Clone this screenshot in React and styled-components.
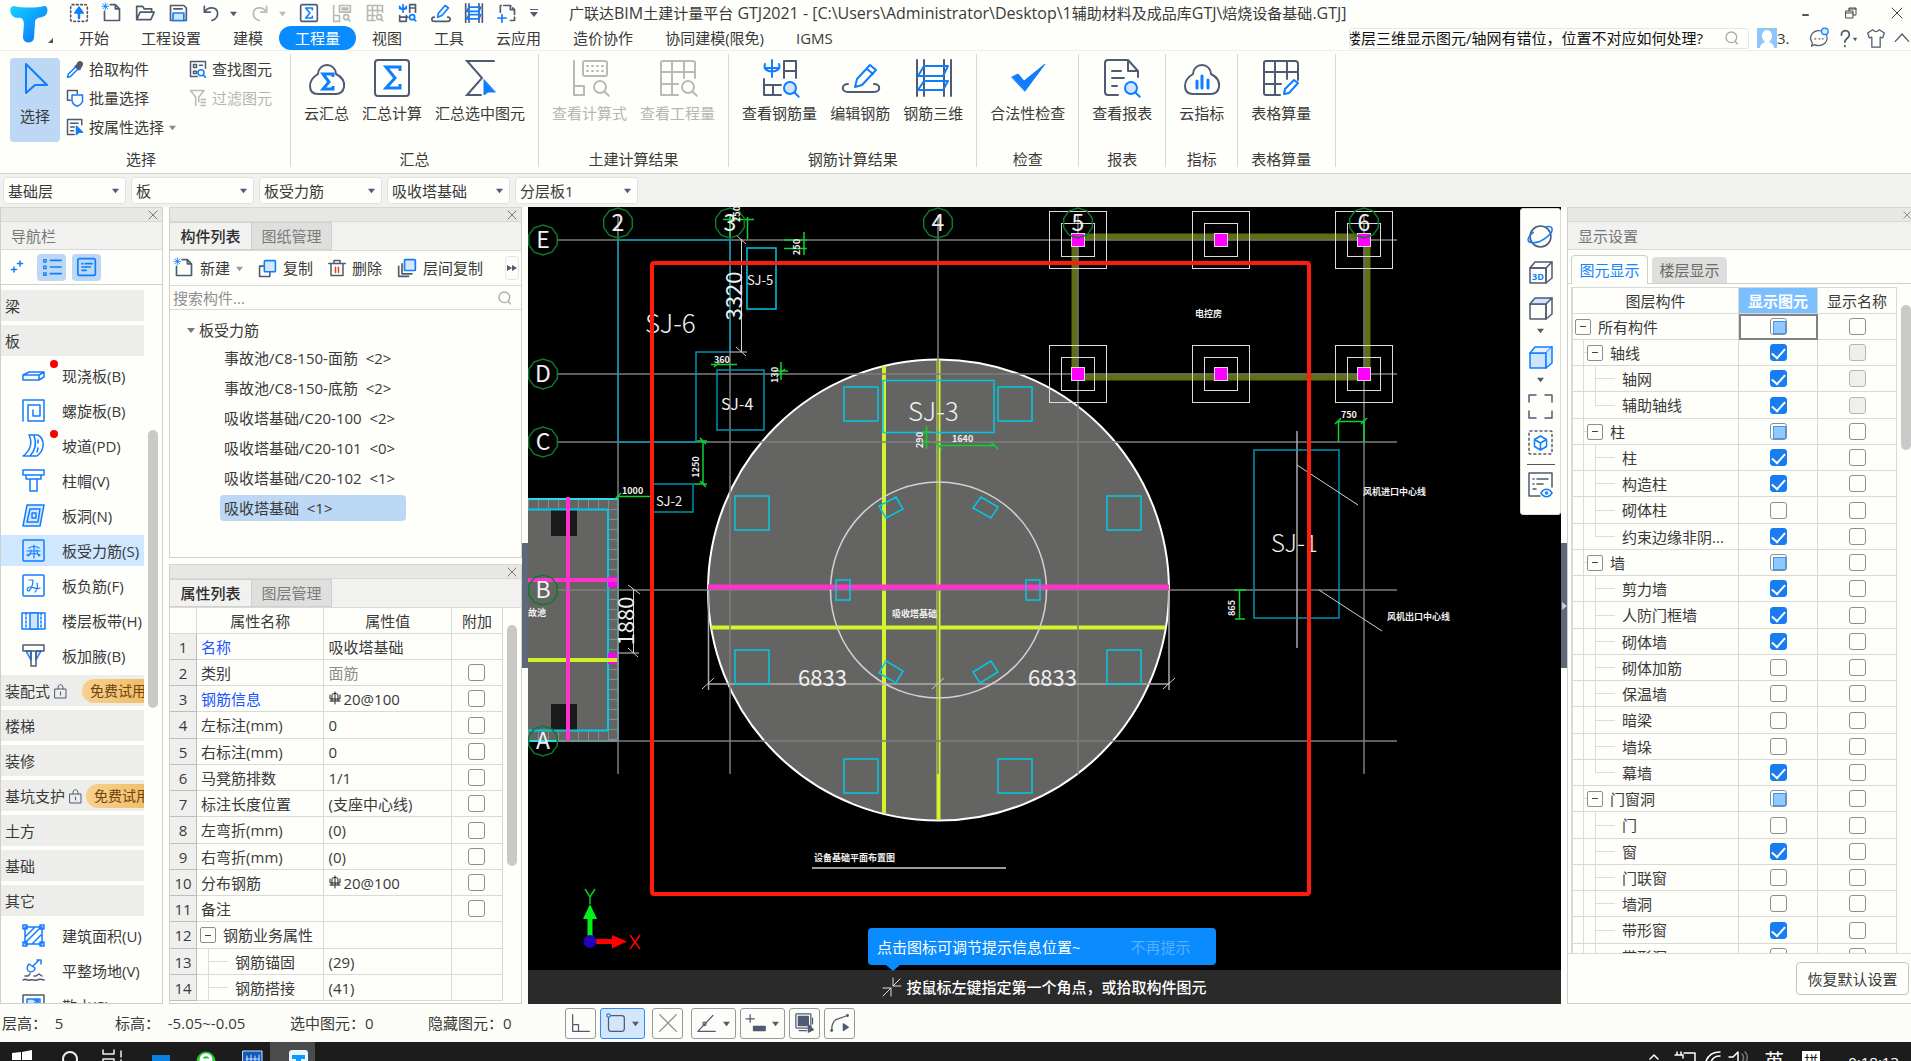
import React, { useEffect, useRef } from "react";
import styled, { createGlobalStyle, css } from "styled-components";

const INK = "#4f5b72";
const BLUE = "#0f7dff";
const LINE = "#d9dad6";
const PAPER = "#fefefb";
const GREY = "#b9bab8";

const Global = createGlobalStyle`
  * { box-sizing: border-box; }
  body { margin: 0; background: ${PAPER}; }
  body, button, input, select, table {
    font-family: "Open Sans", "Noto Sans CJK SC", sans-serif;
    font-size: 15px;
    line-height: 20px;
    color: #3a3a3a;
  }
  button { border: 0; padding: 0; background: none; white-space: nowrap; }
`;

const Window = styled.div`
  display: flex;
  flex-direction: column;
  height: 100vh;
  overflow: hidden;
  background: ${PAPER};
`;

/* ---------- icons ---------- */
const Glyph = styled.svg`
  display: block;
  flex: none;
  overflow: visible;
  fill: none;
  stroke-width: ${(p) => p.$stroke || 2};
  stroke-linecap: round;
  stroke-linejoin: round;
`;

const Icon = ({ w = 20, h, vb = 24, stroke, color = INK, children }) => (
  <Glyph width={w} height={h || w} viewBox={`0 0 ${vb} ${h ? (vb * h) / w : vb}`} $stroke={stroke} stroke={color} aria-hidden="true">
    {children}
  </Glyph>
);

const Caret = ({ color = INK, w = 8 }) => (
  <Icon w={w} vb={8} color="none"><path d="M0 2h8L4 7z" fill={color} /></Icon>
);
const Lens = ({ x, y, r = 4, c = BLUE, fill = "none" }) => (
  <g stroke={c}><circle cx={x} cy={y} r={r} fill={fill} /><path d={`M${x + r * 0.75} ${y + r * 0.75}l${r * 0.7} ${r * 0.7}`} /></g>
);
const CloseIcon = ({ w = 10 }) => <Icon w={w} vb={10} stroke={1} color="#777"><path d="M1 1l8 8M9 1l-8 8" /></Icon>;
const SearchIcon = () => <Icon w={16} stroke={2} color="#aaa"><circle cx="11" cy="11" r="8" /><path d="M17 17l3 4" /></Icon>;

const Sheet = ({ c = INK }) => <path stroke={c} d="M10 2h6l5 5v14H3V10M16 2v5h5" />;
const RebarMark = ({ c = BLUE }) => <path stroke={c} d="M6 2v9M2 4c0 5 8 5 8 0M2 6.500h8" />;

const quick = {
  up: <Icon stroke={2}><rect x="2" y="2" width="20" height="20" rx="2" strokeDasharray="2 3" /><path d="M12 18v-7" stroke={BLUE} strokeWidth="3" /><path d="M7 12l5-7 5 7z" fill={BLUE} stroke={BLUE} /></Icon>,
  neu: <Icon><Sheet /><path stroke={BLUE} d="M1 1l6 6M7 1L1 7M4 0v8M0 4h8" strokeWidth="1" /></Icon>,
  open: <Icon><path d="M2 20V4h7l2 3h9v4M2 20l4-9h17l-4 9z" /></Icon>,
  save: <Icon><path d="M3 3h16l3 3v15H3z" /><path d="M6 21v-9h13v9z" stroke={BLUE} fill="#cfe5ff" /><path d="M7 7h10" /></Icon>,
  undo: <Icon><path d="M4 4v7h7M4 11C8 4 19 4 20 12c0 5-3 8-7 9" /></Icon>,
  redo: <Icon color={GREY}><path d="M20 4v7h-7M20 11C16 4 5 4 4 12c0 5 3 8 7 9" /></Icon>,
  sum: <Icon><rect x="2" y="2" width="20" height="20" rx="2" /><path d="M16 8V6H8l5 6-5 6h8v-2" stroke={BLUE} /></Icon>,
  calc: <Icon color={GREY}><path d="M2 3v19h7v-7H2M9 3h13v8H9zM12 6h7M12 8h7" /><Lens x={17} y={17} r={3} c={GREY} /></Icon>,
  grid: <Icon color={GREY}><path d="M21 11V3H3v18h9M3 9h18M3 15h9M9 3v18M15 3v9" /><Lens x={17} y={17} r={3} c={GREY} /></Icon>,
  rebar: <Icon><RebarMark /><path d="M14 11V2h7v9M14 6h7M2 15v7h8v-7M2 17h10" /><Lens x={17} y={17} r={3} /></Icon>,
  edit: <Icon><path d="M4 17c-4 0-4 5 0 5h16c4 0 4-5 0-5" /><path stroke={BLUE} d="M8 17l1-5 8-9 4 3-8 9z" /></Icon>,
  three: <Icon><path d="M2 1v22M6 1v22M18 1v22M22 1v22" /><path stroke={BLUE} d="M6 5h14l-2 5H3zM6 14h14l-2 5H3z" /></Icon>,
  add: <Icon><path d="M4 11V3h12l5 5v13h-7M16 3v5h5" strokeDasharray="9 3" /><path stroke={BLUE} d="M6 14v9M1 18h10" /></Icon>,
};

const BigSigma = ({ d, c }) => <path d={d} stroke={c} strokeWidth="3" strokeLinejoin="miter" strokeLinecap="butt" />;
const Cloud = () => <path d="M11 16a9 9 0 0 1 18 0c6 3 9 7 8 13-1 5-4 7-8 7H11c-5 0-8-3-8-8 0-6 3-9 8-12z" />;
const big = {
  cloudSum: <><Cloud /><BigSigma c={BLUE} d="M26 19v-3H16l6 8-6 7h10v-3" /></>,
  sum: <><rect x="3" y="2" width="34" height="36" rx="3" /><BigSigma c={BLUE} d="M28 13V9H14l9 11-9 10h14v-4" /></>,
  sumPick: <><path d="M34 3H7l15 17L7 37h14" strokeLinejoin="miter" /><path d="M24 22v15l4-3h7z" fill={BLUE} stroke={BLUE} strokeWidth="1" /></>,
  calc: <><path d="M4 3v34h10v-9H4" /><rect x="13" y="3" width="24" height="15" rx="2" /><path d="M17 8h16M17 13h16" strokeDasharray="1 4" /><Lens x={30} y={29} r={6} c={GREY} /></>,
  grid: <><path d="M37 20V5a2 2 0 0 0-2-2H5a2 2 0 0 0-2 2v32h17M3 14h34M3 26h17M14 3v34M26 3v17" /><Lens x={30} y={29} r={6} c={GREY} /></>,
  rebar: <><path stroke={BLUE} d="M12 2v17M5 6c-4 10 18 10 14 0M5 10h14" /><path d="M24 20V3h12v17M24 13h12M4 21v16h17M4 27h17M13 27v10" /><Lens x={30} y={30} r={6} fill="#cfe5ff" /></>,
  edit: <><path d="M8 26c-7 0-7 8 0 8h26c7 0 7-8 0-8" /><path stroke={BLUE} d="M15 29l2-8 13-14 6 5-14 15zM27 11l6 5" /></>,
  three: <><path d="M4 2v36M11 2v36M31 2v36M38 2v36" /><path stroke={BLUE} d="M11 8h24l-5 10H5zM11 23h24l-5 9H5z" /></>,
  check: <path d="M4 19l6-3 6 7L37 6 17 33z" fill={BLUE} stroke={BLUE} strokeWidth="1" />,
  report: <><path d="M16 37H6a3 3 0 0 1-3-3V5a3 3 0 0 1 3-3h20l10 11v6M26 2v11h10M10 13h9M10 20h12M10 28h5" /><Lens x={29} y={30} r={6} fill="#cfe5ff" /></>,
  cloudBar: <><Cloud /><path stroke={BLUE} strokeWidth="3" d="M15 23v7M20 18v12M26 22v8" /></>,
  table: <><path d="M37 22V6a3 3 0 0 0-3-3H5a2 2 0 0 0-2 2v30a2 2 0 0 0 2 2h14M3 14h34M3 26h17M14 3v34M26 3v18" /><path stroke={BLUE} d="M23 36l1-5 9-9 4 3-9 10z" /></>,
};

/* ---------- title area ---------- */
const Head = styled.header`
  display: flex;
  height: 51px;
  border-bottom: 1px solid #eeeeeb;
`;
const Brand = styled.div`
  display: flex;
  align-items: flex-end;
  width: 63px;
  padding: 0 0 7px 10px;
`;
const HeadRows = styled.div`
  display: flex;
  flex-direction: column;
  flex: 1;
  min-width: 0;
`;
const TitleRow = styled.div`
  display: flex;
  align-items: center;
  height: 27px;
  padding: 0 8px 0 6px;
`;
const QuickBar = styled.div`
  display: flex;
  align-items: center;
  gap: 13px;
  width: 500px;
`;
const Split = styled.div`
  display: flex;
  align-items: center;
  gap: 9px;
`;
const Title = styled.h1`
  flex: 1;
  margin: 0;
  font-size: 15px;
  font-weight: 400;
  line-height: 20px;
  white-space: nowrap;
`;
const Latin = styled.span`
  font-size: 16px;
`;
const WinButtons = styled.div`
  display: flex;
  align-items: center;
  gap: 34px;
`;
const MenuRow = styled.nav`
  display: flex;
  align-items: center;
  height: 24px;
`;
const MenuItem = styled.button`
  height: 24px;
  padding: 0 16px;
  border-radius: 12px;
  ${(p) => p.$active && css`background: #0a8cff; color: #fff;`}
`;
const MenuTools = styled.div`
  display: flex;
  align-items: center;
  gap: 8px;
  margin-left: auto;
  padding-right: 1px;
`;
const HelpBox = styled.label`
  display: flex;
  align-items: center;
  width: 400px;
  height: 21px;
  padding-right: 8px;
  border: 1px solid #e6e6e3;
  border-radius: 3px;
`;
const PlainInput = styled.input`
  flex: 1;
  min-width: 0;
  height: 20px;
  padding: 0;
  border: 0;
  outline: 0;
  background: transparent;
  color: #111;
  text-indent: ${(p) => p.$shift || 0}px;
  &::placeholder { color: #8f8f8f; opacity: 1; }
`;
const Account = styled.div`
  display: flex;
  align-items: center;
  width: 44px;
`;

/* ---------- ribbon ---------- */
const Ribbon = styled.div`
  display: flex;
  height: 123px;
  padding: 3px 0 6px;
  border-bottom: 1px solid #d6d7d3;
`;
const Group = styled.section`
  display: flex;
  flex-direction: column;
  justify-content: space-between;
  padding: ${(p) => p.$pad || "4px 13px 0"};
  border-right: 1px solid #d9dad6;
`;
const GroupName = styled.div`
  height: 18px;
  text-align: center;
  line-height: 20px;
`;
const GroupBody = styled.div`
  display: flex;
  gap: 13px;
`;
const PickBody = styled.div`
  display: flex;
  gap: 6px;
`;
const BigButton = styled.button`
  display: flex;
  flex-direction: column;
  align-items: center;
  gap: 5px;
  color: ${(p) => (p.$off ? "#b5b6b4" : "#3a3a3a")};
`;
const PickButton = styled(BigButton)`
  width: 50px;
  height: 84px;
  padding-top: 1px;
  border-radius: 4px;
  background: #bcd8f5;
`;
const SmallCol = styled.div`
  display: flex;
  flex-direction: column;
  gap: 9px;
  padding-top: 1px;
`;
const SmallButton = styled.button`
  display: flex;
  align-items: center;
  gap: 5px;
  height: 20px;
  color: ${(p) => (p.$off ? "#b5b6b4" : "#3a3a3a")};
`;

/* ---------- filter bar ---------- */
const FilterBar = styled.div`
  display: flex;
  gap: 5px;
  height: 33px;
  padding: 3px;
  background: #f1f1ef;
`;
const ComboBox = styled.label`
  display: grid;
  grid-template-columns: 1fr 13px;
  align-items: center;
  width: 123px;
  height: 27px;
  border: 1px solid #e2e2df;
  border-radius: 4px;
  background: ${PAPER};
`;
const ComboSelect = styled.select`
  grid-area: 1 / 1 / 2 / 3;
  appearance: none;
  width: 100%;
  height: 25px;
  padding: 0 4px;
  border: 0;
  background: transparent;
`;
const ComboArrow = styled.span`
  grid-area: 1 / 2 / 2 / 3;
  pointer-events: none;
`;

/* ---------- panels ---------- */
const Main = styled.main`
  display: flex;
  flex: 1;
  min-height: 0;
`;
const Panel = styled.section`
  display: flex;
  flex-direction: column;
  flex: ${(p) => p.$flex || "none"};
  min-height: 0;
  border: 1px solid #cfd0cd;
  border-top: 0;
  overflow: hidden;
`;
const NavPanel = styled(Panel)`
  width: 163px;
  margin-right: 6px;
`;
const MidColumn = styled.div`
  display: flex;
  flex-direction: column;
  gap: 6px;
  width: 353px;
`;
const SidePanel = styled(Panel)`
  width: 344px;
  border-right: 0;
`;
const Strip = styled.div`
  display: flex;
  flex: none;
  align-items: center;
  justify-content: flex-end;
  height: 15px;
  padding-right: ${(p) => (p.$edge ? 0 : 4)}px;
  border-top: 1px solid #d6d7d3;
  border-bottom: 1px solid #d9dad6;
  background: #e7e7e4;
`;
const PanelTitle = styled.h2`
  flex: none;
  height: 28px;
  margin: 0;
  padding: 4px 10px;
  border-bottom: 1px solid ${LINE};
  background: #f1f1ef;
  color: #777;
  font-size: 15px;
  font-weight: 400;
  line-height: 20px;
`;
const NavTools = styled.div`
  display: flex;
  flex: none;
  align-items: center;
  gap: 6px;
  height: 35px;
  padding-left: 1px;
  border-bottom: 1px solid #cfd0cd;
`;
const NavTool = styled.button`
  display: grid;
  place-items: center;
  width: 29px;
  height: 27px;
  border-radius: 4px;
  background: ${(p) => (p.$on ? "#bcd8f5" : "none")};
`;
const ScrollArea = styled.div`
  display: flex;
  flex: 1;
  min-height: 0;
  overflow: hidden;
`;
const Track = styled.div`
  flex: none;
  width: ${(p) => p.$w || 18}px;
  padding: ${(p) => p.$top}px 4px 0;
`;
const Thumb = styled.div`
  width: 10px;
  height: ${(p) => p.$h}px;
  border-radius: 5px;
  background: #c9cac8;
`;
const NavList = styled.ul`
  display: flex;
  flex-direction: column;
  flex: 1;
  gap: 4px;
  margin: 0;
  padding: 5px 0 0;
  list-style: none;
  overflow: hidden;
`;
const NavHead = styled.button`
  display: flex;
  align-items: center;
  gap: 4px;
  width: 100%;
  height: 31px;
  padding-left: 4px;
  overflow: hidden;
  background: #edeeeb;
`;
const Trial = styled.span`
  flex: none;
  width: 80px;
  height: 24px;
  margin-left: auto;
  margin-right: -18px;
  padding-left: 8px;
  border-radius: 12px;
  background: linear-gradient(90deg, #f9d08e, #ecb95c);
  color: #6d4310;
  font-size: 14px;
  line-height: 24px;
  text-align: left;
`;
const NavItem = styled.button`
  display: flex;
  align-items: center;
  gap: 17px;
  width: 100%;
  height: 31px;
  padding-left: 21px;
  background: ${(p) => (p.$on ? "#cfe7ff" : "none")};
`;
const NavIcon = styled.span`
  position: relative;
  flex: none;
`;
const Dot = styled.i`
  position: absolute;
  top: -4px;
  left: 28px;
  width: 8px;
  height: 8px;
  border-radius: 50%;
  background: #f00;
`;

const Tabs = styled.div`
  display: flex;
  flex: none;
  height: 29px;
  border-bottom: 1px solid ${LINE};
  background: #f1f1ef;
`;
const Tab = styled.button`
  width: 81px;
  border: 1px solid #cfd0d0;
  border-left-width: ${(p) => (p.$on ? 0 : 1)}px;
  border-right-width: ${(p) => (p.$on ? 0 : 1)}px;
  background: ${(p) => (p.$on ? "#f1f1ef" : "#dfdfdd")};
  color: ${(p) => (p.$on ? "#2d2d2d" : "#7b7b7b")};
  font-weight: ${(p) => (p.$on ? 500 : 400)};
`;
const Actions = styled.div`
  display: flex;
  flex: none;
  align-items: center;
  gap: 15px;
  height: 35px;
  padding: 0 2px 0 4px;
  border-bottom: 1px solid ${LINE};
`;
const Action = styled.button`
  display: flex;
  align-items: center;
  gap: 6px;
`;
const MoreButton = styled.button`
  display: grid;
  place-items: center;
  width: 14px;
  height: 24px;
  margin-left: auto;
  border: 1px solid #e6e6e3;
  border-radius: 4px;
`;
const SearchLine = styled.label`
  display: flex;
  flex: none;
  align-items: center;
  height: 24px;
  padding: 0 8px 0 3px;
  border-bottom: 1px solid ${LINE};
`;
const Tree = styled.ul`
  flex: 1;
  margin: 0;
  padding: 5px 0 0;
  list-style: none;
`;
const TreeRoot = styled.li`
  display: flex;
  align-items: center;
  gap: 4px;
  height: 30px;
  padding-left: 17px;
`;
const TreeLeaf = styled.li`
  height: 26px;
  margin: 0 0 4px 50px;
  width: 186px;
  padding: 3px 4px;
  border-radius: 4px;
  white-space: pre;
  background: ${(p) => (p.$on ? "#bcd8f5" : "none")};
`;

/* ---------- tables ---------- */
const Grid = styled.table`
  flex: 1;
  align-self: flex-start;
  width: 100%;
  border-collapse: separate;
  border-spacing: 0;
  table-layout: fixed;
  th, td {
    height: 26px;
    padding: 0;
    border-right: 1px solid ${LINE};
    border-bottom: 1px solid ${LINE};
    font-weight: 400;
    white-space: nowrap;
    overflow: hidden;
    line-height: 20px;
  }
  tbody tr:nth-child(4n) td, tbody tr:nth-child(4n) th { height: 27px; }
`;
const IndexCell = styled.th`
  background: #efefed;
  && { border-right-color: #bdbebc; border-bottom-color: #bdbebc; }
`;
const NameCell = styled.td`
  && { padding-left: ${(p) => (p.$depth ? 0 : 4)}px; }
  color: ${(p) => (p.$link ? "#1a55ff" : "inherit")};
`;
const ValueCell = styled.td`
  && { padding-left: 4px; }
  color: ${(p) => (p.$dim ? "#8d8d8d" : "inherit")};
`;
const ValueFlow = styled.span`
  display: flex;
  align-items: center;
  gap: 1px;
`;
const CheckCell = styled.td`
  text-align: center;
  ${(p) => p.$focus && css`outline: 2px solid #808184; outline-offset: -2px;`}
`;
const Check = styled.input`
  appearance: none;
  display: block;
  width: 17px;
  height: 17px;
  margin: 0 auto;
  border: 1px solid #8d8e8d;
  border-radius: 3px;
  background: ${PAPER};
  &:checked { border-color: #187df0; background: #187df0; }
  &:checked::after {
    content: "";
    display: block;
    width: 11px;
    height: 6px;
    margin: 3px auto 0;
    border: solid #fff;
    border-width: 0 0 2px 2px;
    rotate: -48deg;
  }
  &:indeterminate::after {
    content: "";
    display: block;
    width: 11px;
    height: 11px;
    margin: 2px;
    border: 1px solid #3d97f5;
    background: #90c8ff;
  }
  &:disabled { border-color: #b5b6b4; background: #efefed; }
`;
const Toggle = styled.button`
  flex: none;
  display: grid;
  place-items: center;
  align-self: center;
  width: 16px;
  height: 16px;
  border: 1px solid #8d8e8d;
  border-radius: 2px;
  background: ${PAPER};
  &::after { content: ""; width: 6px; height: 1px; background: #444; }
`;
const TreeName = styled.div`
  display: flex;
  align-items: center;
  height: 100%;
  padding-left: ${(p) => p.$pad}px;
`;
const TreeText = styled.span`
  margin-left: 7px;
`;
const bar = "linear-gradient(#dcddda, #dcddda)";
const Rail = styled.span`
  flex: none;
  align-self: stretch;
  width: ${(p) => p.$w}px;
  background: ${bar} 0 0 / 1px ${(p) => (p.$last ? "50%" : "100%")} no-repeat
    ${(p) => p.$arm && css`, ${bar} 0 50% / 100% 1px no-repeat`};
`;

/* ---------- drawing area ---------- */
const Gutter = styled.div`
  display: flex;
  align-items: center;
  width: 6px;
`;
const Grip = styled.button`
  display: grid;
  place-items: center;
  width: 6px;
  height: 125px;
  background: #5d6979;
`;
const Stage = styled.section`
  position: relative;
  display: flex;
  flex-direction: column;
  flex: 1;
  min-width: 0;
  background: #000;
`;
const Drawing = styled.svg`
  display: block;
  flex: 1;
  width: 100%;
  min-height: 0;
  fill: none;
  text { fill: #f0f0f0; stroke: none; font-family: "Noto Sans CJK SC", sans-serif; }
`;
const Prompt = styled.div`
  display: flex;
  align-items: center;
  justify-content: center;
  gap: 5px;
  height: 34px;
  background: #2a2a2a;
  color: #fff;
  font-weight: 500;
`;
const Tip = styled.div`
  position: absolute;
  bottom: 39px;
  left: 340px;
  display: flex;
  align-items: center;
  gap: 50px;
  height: 37px;
  width: 348px;
  padding: 0 9px;
  border-radius: 4px;
  background: #0a8cff;
  color: #fff;
  white-space: nowrap;
  &::after {
    content: "";
    position: absolute;
    top: 37px;
    left: 18px;
    border: 7px solid transparent;
    border-top: 6px solid #0a8cff;
    border-bottom: 0;
  }
`;
const TipButton = styled.button`
  color: #55b0ff;
`;
const ViewTools = styled.div`
  position: absolute;
  top: 1px;
  right: 0;
  display: flex;
  flex-direction: column;
  align-items: center;
  gap: 11px;
  width: 41px;
  height: 307px;
  padding-top: 15px;
  border: 1px solid #dcdcda;
  border-radius: 3px;
  background: ${PAPER};
`;
const ViewButton = styled.button`
  display: grid;
  justify-items: center;
  gap: 6px;
`;
const Rule = styled.hr`
  width: 28px;
  margin: -2px 0 -4px;
  border: 0;
  border-top: 1px solid #555;
`;

/* ---------- display settings ---------- */
const SideTabs = styled.div`
  display: flex;
  flex: none;
  align-items: flex-end;
  gap: 4px;
  height: 34px;
  padding-left: 3px;
  border-bottom: 1px solid #cfd0cd;
`;
const SideTab = styled.button`
  width: ${(p) => (p.$on ? 77 : 75)}px;
  height: ${(p) => (p.$on ? 29 : 26)}px;
  margin-bottom: ${(p) => (p.$on ? -1 : 0)}px;
  border: ${(p) => (p.$on ? "1px solid #cfd0cd" : "0")};
  border-bottom: 0;
  border-radius: 4px 4px 0 0;
  background: ${(p) => (p.$on ? PAPER : "#dededc")};
  color: ${(p) => (p.$on ? "#1683ff" : "#6b6b6b")};
`;
const SideBody = styled(ScrollArea)`
  margin-top: 3px;
  padding-left: 3px;
  border-bottom: 1px solid ${LINE};
`;
const GridFrame = styled.div`
  flex: 1;
  border-top: 1px solid ${LINE};
  border-left: 2px solid ${LINE};
`;
const HotTh = styled.th`
  background: #7cbfff;
  color: #fff;
  && { font-weight: 700; }
`;
const SideFoot = styled.div`
  display: flex;
  flex: none;
  justify-content: flex-end;
  height: 49px;
  padding: 8px 2px 0 0;
`;
const ResetButton = styled.button`
  width: 113px;
  height: 33px;
  border: 1px solid #c4c5c3;
  border-radius: 4px;
`;

/* ---------- footers ---------- */
const StatusBar = styled.footer`
  display: flex;
  align-items: center;
  height: 38px;
  background: #fcfdf9;
`;
const StatusText = styled.span`
  width: ${(p) => p.$w}px;
  padding-left: 2px;
  white-space: pre;
`;
const SnapButton = styled.button`
  display: flex;
  align-items: center;
  justify-content: space-between;
  width: ${(p) => (p.$menu ? 45 : 31)}px;
  height: 31px;
  margin-right: ${(p) => p.$after || 4}px;
  padding: 0 5px;
  border: 1px solid ${(p) => (p.$on ? "#2f8cf5" : "#9a9b99")};
  border-radius: 3px;
  background: ${(p) => (p.$on ? "#d3e6fb" : "none")};
`;
const TaskBar = styled.footer`
  display: flex;
  align-items: flex-start;
  justify-content: space-between;
  height: 19px;
  overflow: hidden;
  background: #1c1c1c;
  color: #fff;
`;
const TaskGroup = styled.div`
  display: flex;
`;
const TaskItem = styled.button`
  width: 45px;
  height: 19px;
  padding: 8px 0 0 12px;
  background: ${(p) => (p.$on ? "#4b4b4b" : "none")};
`;
const Tray = styled.div`
  display: flex;
  gap: 18px;
  padding-right: 12px;
`;
const TrayIcons = styled.div`
  padding-top: 9px;
`;
const TrayText = styled.span`
  padding-top: 8px;
  font-size: ${(p) => p.$size || 15}px;
  line-height: 24px;
`;
const ImeMark = styled.span`
  height: 22px;
  margin: 9px 10px 0 0;
  padding: 0 2px;
  background: #fff;
  color: #111;
  font-size: 14px;
  line-height: 20px;
`;

/* ---------- data ---------- */
const TITLE = "广联达BIM土建计量平台 GTJ2021 - [C:\\Users\\Administrator\\Desktop\\1辅助材料及成品库GTJ\\焙烧设备基础.GTJ]";
const MENU = ["开始", "工程设置", "建模", "工程量", "视图", "工具", "云应用", "造价协作", "协同建模(限免)", "IGMS"];
const RIBBON = [
  ["汇总", [["cloudSum", "云汇总"], ["sum", "汇总计算"], ["sumPick", "汇总选中图元"]]],
  ["土建计算结果", [["calc", "查看计算式", 1], ["grid", "查看工程量", 1]]],
  ["钢筋计算结果", [["rebar", "查看钢筋量"], ["edit", "编辑钢筋"], ["three", "钢筋三维"]]],
  ["检查", [["check", "合法性检查"]]],
  ["报表", [["report", "查看报表"]]],
  ["指标", [["cloudBar", "云指标"]]],
  ["表格算量", [["table", "表格算量"]], "4px 24px 0 13px"],
];
const COMBOS = [["楼层", "基础层"], ["构件大类", "板"], ["构件类型", "板受力筋"], ["构件", "吸收塔基础"], ["分层", "分层板1"]];

const NAV = [
  { head: "梁" }, { head: "板" },
  { name: "现浇板(B)", dot: 1, icon: <path d="M1 11l6-3h15v5l-5 3H1zM1 11h16v5M17 11l5-3" /> },
  { name: "螺旋板(B)", icon: <path d="M1 22V1h21v21H6V6h12v11h-7v-6" /> },
  { name: "坡道(PD)", dot: 1, icon: <path d="M7 1h9c7 4 7 15-1 21H1C8 17 11 9 7 1zM12 2c3 7 1 15-4 20M16 6v3M16 14l-1 4" /> },
  { name: "柱帽(V)", icon: <path d="M1 1h21v5H1zM4 6h15v4H4zM8 10h7v12H8z" /> },
  { name: "板洞(N)", icon: <><path d="M5 1h17l-4 21H1z" fill="#d6e8fd" /><path d="M8 5h10l-2 13H5zM10 9h4v5h-4z" /></> },
  { name: "板受力筋(S)", on: 1, icon: <><rect x="1" y="1" width="21" height="21" rx="1" /><path d="M12 6v13M7 9c2-2 8-2 10 0M5 12h13M5 16c3-2 11-2 13 0M9 11c0 3-1 5-3 6M15 11c0 3 1 5 2 6" strokeWidth="1.200" /></> },
  { name: "板负筋(F)", icon: <><rect x="1" y="1" width="21" height="21" rx="1" /><path d="M7 6h4c0 4-2 9-4 11-3 0-2-4 1-4 4 0 6 3 10 1M15 9c1 4 0 7-2 9" strokeWidth="1.200" /></> },
  { name: "楼层板带(H)", icon: <><path d="M0 4h23v16H0z" /><path d="M8 4h8v16H8z" fill="#cfe5ff" /><path d="M4 4v16M19 4v16" strokeDasharray="2 2" /></> },
  { name: "板加腋(B)", icon: <><path d="M4 7l5 9V7zM19 7l-5 9V7z" fill="#cfe5ff" /><path stroke={INK} d="M1 1h21v6H1zM9 7v15h5V7" /></> },
  { head: "装配式", trial: 1 }, { head: "楼梯" }, { head: "装修" }, { head: "基坑支护", trial: 1 },
  { head: "土方" }, { head: "基础" }, { head: "其它" },
  { name: "建筑面积(U)", icon: <path d="M3 3h17v17H3zM1 1h4v4H1zM18 1h4v4h-4zM1 18h4v4H1zM18 18h4v4h-4zM4 12l8-8M4 18L18 4M11 19l8-8" /> },
  { name: "平整场地(V)", icon: <><path d="M17 1l-6 6M15 1h4v4M7 5c-3 3-2 7 1 8 3 0 5-2 5-4z" /><path stroke={INK} d="M1 21c3-2 4 1 7 0s5 1 7 0 4-1 7 0M3 17h3l2-2M12 17h2l3-2 3 2" /></> },
  { name: "散水(S)", icon: <><rect x="1" y="1" width="21" height="21" stroke={INK} /><path d="M5 5h13v13H5z" fill="#cfe5ff" /><path d="M8 14l8-8M12 6h4v4" /></> },
];

const PARTS = ["事故池/C8-150-面筋  <2>", "事故池/C8-150-底筋  <2>", "吸收塔基础/C20-100  <2>", "吸收塔基础/C20-101  <0>", "吸收塔基础/C20-102  <1>", "吸收塔基础  <1>"];

const PROPS = [
  { n: "名称", v: "吸收塔基础", link: 1 },
  { n: "类别", v: "面筋", dim: 1, c: 1 },
  { n: "钢筋信息", v: "20@100", bar: 1, link: 1, c: 1 },
  { n: "左标注(mm)", v: "0", c: 1 },
  { n: "右标注(mm)", v: "0", c: 1 },
  { n: "马凳筋排数", v: "1/1", c: 1 },
  { n: "标注长度位置", v: "(支座中心线)", c: 1 },
  { n: "左弯折(mm)", v: "(0)", c: 1 },
  { n: "右弯折(mm)", v: "(0)", c: 1 },
  { n: "分布钢筋", v: "20@100", bar: 1, c: 1 },
  { n: "备注", v: "", c: 1 },
  { n: "钢筋业务属性", v: "", depth: 1 },
  { n: "钢筋锚固", v: "(29)", depth: 2 },
  { n: "钢筋搭接", v: "(41)", depth: 2 },
];

const LAYERS = [
  [0, "所有构件", "m"], [1, "轴线", "y", 1], [2, "轴网", "y", 1], [2, "辅助轴线", "y", 1],
  [1, "柱", "m"], [2, "柱", "y"], [2, "构造柱", "y"], [2, "砌体柱", "n"], [2, "约束边缘非阴...", "y"],
  [1, "墙", "m"], [2, "剪力墙", "y"], [2, "人防门框墙", "y"], [2, "砌体墙", "y"], [2, "砌体加筋", "n"],
  [2, "保温墙", "n"], [2, "暗梁", "n"], [2, "墙垛", "n"], [2, "幕墙", "y"],
  [1, "门窗洞", "m"], [2, "门", "n"], [2, "窗", "y"], [2, "门联窗", "n"], [2, "墙洞", "n"], [2, "带形窗", "y"], [2, "带形洞", "n"],
];

function TriCheck({ state = "n", label, disabled }) {
  const ref = useRef(null);
  useEffect(() => { ref.current.indeterminate = state === "m"; }, [state]);
  return <Check ref={ref} type="checkbox" defaultChecked={state === "y"} disabled={disabled} aria-label={label} />;
}

/* ---------- the plan ---------- */
const CY = "#00c8e6";
const CYD = "#0093b0";
const GR = "#0fd232";
const AX = "#7d7d7d";
const bubble = (cx, cy) => Array.from({ length: 10 }, (_, i) => {
  const a = (i * Math.PI) / 5 + Math.PI / 2;
  return `${(cx + 15 * Math.cos(a)).toFixed(1)},${(cy + 15 * Math.sin(a)).toFixed(1)}`;
}).join(" ");

const BUBBLES = [["2", 618, 223], ["3", 730, 223], ["4", 938, 223], ["5", 1078, 223], ["6", 1364, 223],
  ["E", 543, 240], ["D", 543, 374], ["C", 543, 442], ["B", 543, 590], ["A", 543, 741]];
const PADS = [[844, 387], [998, 387], [735, 496], [1107, 496], [735, 650], [1107, 650], [844, 759], [998, 759]];
const FOOTINGS = [1078, 1221, 1364].flatMap((x) => [[x, 240], [x, 374]]);

const Upright = ({ x, y, size, children }) => (
  <text transform={`rotate(-90 ${x} ${y})`} x={x} y={y} textAnchor="middle" fontSize={size}>{children}</text>
);

function Plan() {
  return (
    <Drawing viewBox="528 207 1033 763" preserveAspectRatio="xMidYMid slice" role="img" aria-label="设备基础平面布置图">
      <g>
        <rect x="528" y="499" width="90" height="242" fill="#646463" />
        <path d="M528 504h90M613 499v242M528 736h90" stroke="#8a8a8a" strokeWidth="9" strokeDasharray="1 9" />
        <path d="M551 510h26v26h-26zM551 704h26v26h-26z" fill="#1a1a1a" />
        <path d="M528 509.500H608V730.500H528" stroke={CY} strokeWidth="2" />
        <path d="M528 499H618V741H528" stroke="#29dcf5" strokeWidth="2" />
        <path d="M608 577h9v10h-9zM608 653h9v11h-9z" fill="#f0f" />
        <path d="M528 660h90" stroke="#d0f02a" strokeWidth="4" />
        <path d="M568 497v245M528 580h90" stroke="#ff33cc" strokeWidth="4" />
      </g>
      <circle cx="938.500" cy="590" r="230.500" fill="#646463" stroke="#fff" strokeWidth="2" />
      <path d="M884 366v447M938.500 360v460M711 627.500H1165" stroke="#d0f52a" strokeWidth="4" />
      <g stroke="#5f6f14" strokeWidth="6">
        <path d="M1078 236.500H1364M1078 377.500H1364M1074.500 240V374M1367.500 240V374" />
      </g>
      <g stroke={AX} strokeWidth="1.500">
        <path d="M557 240H1397M557 374H1397M557 442H1397M557 590H1397M557 741H1397" />
        <path d="M618 215V774M730 215V774M938 215V774M1078 215V774M1364 215V774" />
        <path d="M1297 431V648M708.500 590V690M1169 590V690M708 684H1169" stroke="#aaa" />
      </g>
      <circle cx="938.500" cy="590" r="108" stroke="#d2d2d2" strokeWidth="1.500" />
      <path d="M708 587H1169" stroke="#ff33cc" strokeWidth="5" />

      <g stroke={CY} strokeWidth="1.500">
        {PADS.map(([x, y]) => <rect key={`${x}-${y}`} x={x} y={y} width="34" height="34" />)}
        <rect x="883" y="380.500" width="111" height="52" />
        <rect x="836" y="580" width="14" height="20" />
        <rect x="1026" y="580" width="14" height="20" />
        <path d="M879 506l17-9 7 12-17 9zM973 508l8-11 17 10-7 11zM886 661l17 10-7 12-17-10zM973 672l18-11 7 11-18 11z" />
        <rect x="747" y="248" width="29" height="61" />
        <rect x="717" y="370" width="47" height="60" stroke={CYD} />
        <rect x="652" y="484" width="41" height="28" stroke={CYD} />
        <rect x="1254" y="450" width="85" height="168" stroke={CYD} />
        <path d="M618 240H730V352H696V442H618z" stroke={CYD} />
      </g>

      {FOOTINGS.map(([x, y]) => (
        <g key={`${x}-${y}`} stroke="#dcdcdc">
          <rect x={x - 28.500} y={y - 28.500} width="57" height="57" />
          <rect x={x - 16.500} y={y - 16.500} width="33" height="33" />
          <rect x={x - 6.500} y={y - 6.500} width="13" height="13" fill="#f0f" />
        </g>
      ))}

      <g stroke={GR} strokeWidth="1.500">
        <path d="M723 219.500h31M747.500 217v22M730 215v23M784 240h23M784 248.500h23M804 232v23M711 364.500h26M714 367l6-5M781 362v18M774 371h14M777 376l8-7M703 441V484M697 441h10M694 484h13M700 438l6 6M700 481l6 6" />
        <path d="M618 496.500h34M615 499l6-6M926.500 426v23M922 432h9M922 442h9M938 445.500h56M935 442l7 7M991 442l7 7M1338.500 442V421.500H1364V442M1335 424l6-6M1361 424l6-6M1234 590h12M1239.500 590v29M1235 619h10" />
      </g>
      <g stroke="#cfcfcf">
        <path d="M741.500 239V352M730 352h17M736 235l10 9M736 347l10 9M628 585l12 9M628 648l10 9M618 653h21M633.500 590v63" />
        <path d="M702 689l12-11M932 689l12-11M1163 689l12-11M1297 465l61 40M1319 590l63 41" />
      </g>
      <path d="M812 868H1006" stroke="#9b9b9b" strokeWidth="2" />

      {BUBBLES.map(([t, x, y]) => (
        <g key={t}>
          <polygon points={bubble(x, y)} stroke="#0b7a2e" strokeWidth="1.500" />
          <text x={x} y={y + 8} textAnchor="middle" fontSize="23">{t}</text>
        </g>
      ))}
      <g fontSize="26" fontWeight="300">
        <text x="645" y="333">SJ-6</text>
        <text x="908" y="421">SJ-3</text>
        <text x="1271" y="552" fontSize="24">SJ-1</text>
      </g>
      <g fontSize="13">
        <text x="747" y="285">SJ-5</text>
        <text x="721" y="410" fontSize="16">SJ-4</text>
        <text x="656" y="506">SJ-2</text>
      </g>
      <g fontSize="22">
        <text x="798" y="686">6833</text>
        <text x="1028" y="686">6833</text>
      </g>
      <Upright x={742} y={296} size={22}>3320</Upright>
      <Upright x={634} y={621} size={22}>1880</Upright>
      <g fontSize="9" fontWeight="700">
        <text x="714" y="363">360</text>
        <text x="622" y="494">1000</text>
        <text x="952" y="442">1640</text>
        <text x="1341" y="418">750</text>
        <Upright x={740} y={214} size={9}>250</Upright>
        <Upright x={800} y={247} size={9}>250</Upright>
        <Upright x={778} y={375} size={9}>130</Upright>
        <Upright x={699} y={467} size={9}>1250</Upright>
        <Upright x={923} y={440} size={9}>290</Upright>
        <Upright x={1235} y={608} size={9}>865</Upright>
        <text x="528" y="616">故池</text>
        <text x="1195" y="317">电控房</text>
        <text x="892" y="617">吸收塔基础</text>
        <text x="1363" y="495">风机进口中心线</text>
        <text x="1387" y="620">风机出口中心线</text>
        <text x="814" y="861">设备基础平面布置图</text>
      </g>

      <rect x="652" y="263" width="657" height="631" rx="2" stroke="#ff1c0c" strokeWidth="4" />

      <path d="M590 941V917" stroke="#00f01c" strokeWidth="5" />
      <path d="M583 919l7-15 7 15z" fill="#00f01c" />
      <path d="M590 941.500h24" stroke="#f00" strokeWidth="5" />
      <path d="M612 935l15 6.500-15 7z" fill="#f00" />
      <circle cx="590" cy="941.500" r="6.500" fill="#2400b8" />
      <path d="M585 889l5 8 5-8M590 897v7" stroke="#00c81c" strokeWidth="1.500" />
      <path d="M630 935l10 14M640 935l-10 14" stroke="#f00" strokeWidth="1.500" />
    </Drawing>
  );
}

const cube = (face, top) => (
  <><path d="M2 8h16v15H2z" fill={face} /><path d="M2 8l5-6h17l-6 6z" fill={top} /><path d="M18 8v15l6-5V2" fill={face} /></>
);

function TitleArea() {
  return (
    <Head>
      <Brand>
        <Glyph width="38" height="37" viewBox="0 0 38 37" aria-label="广联达">
          <defs>
            <linearGradient id="brand" x1="0" y1="0" x2="1" y2="1"><stop offset="0" stopColor="#16d3ff" /><stop offset="1" stopColor="#0a6cff" /></linearGradient>
          </defs>
          <path d="M4 0c8 2 22 2 30 0 5-1 5 10-2 11-5 1-7 2-7 6l-1 15c-1 6-10 6-11 0 0-8 2-14 0-18C11 10 7 13 4 11 0 9-2 0 4 0z" fill="url(#brand)" />
        </Glyph>
        <Icon w={5} vb={5} color="none"><path d="M5 0v5H0z" fill="#555" /></Icon>
      </Brand>
      <HeadRows>
        <TitleRow>
          <QuickBar>
            {quick.up}{quick.neu}{quick.open}{quick.save}
            <Split>{quick.undo}<Caret w={7} /></Split>
            <Split>{quick.redo}<Caret w={7} color={GREY} /></Split>
            {quick.sum}{quick.calc}{quick.grid}{quick.rebar}{quick.edit}{quick.three}{quick.add}
            <Icon w={8} vb={8} color="none"><path d="M0 0h8v1H0zM0 3h8L4 8z" fill={INK} /></Icon>
          </QuickBar>
          <Title>
            {TITLE.split(/([\x20-\x7e]+)/).map((part, i) => (i % 2 ? <Latin key={i}>{part}</Latin> : part))}
          </Title>
          <WinButtons>
            <button aria-label="最小化"><Icon w={10} vb={10} color="#555"><path d="M2 7h5" /></Icon></button>
            <button aria-label="还原"><Icon w={12} vb={12} stroke={1} color="#444"><path d="M1 4h7v7H1zM1 6h7M4 4V1h7v7H8M4 2h7" /></Icon></button>
            <button aria-label="关闭"><Icon w={12} vb={12} stroke={1} color="#444"><path d="M1 1l10 10M11 1L1 11" /></Icon></button>
          </WinButtons>
        </TitleRow>
        <MenuRow>
          {MENU.map((m) => <MenuItem key={m} $active={m === "工程量"}>{m}</MenuItem>)}
          <MenuTools>
            <HelpBox>
              <PlainInput aria-label="搜索帮助" $shift={-4} defaultValue="楼层三维显示图元/轴网有错位，位置不对应如何处理?" />
              <SearchIcon />
            </HelpBox>
            <Account>
              <Icon w={20} vb={20} color="none"><path fill="#8cc6fb" d="M0 0h20v20H0z" /><path fill="#fff" d="M5 8c0-8 10-8 10 0 0 3-2 5-3 6 3 1 5 3 5 6H3c0-3 2-5 5-6-1-1-3-3-3-6z" /></Icon>
              3.
            </Account>
            <Icon w={20} stroke={1.500}><path d="M3 22l1-4C-1 11 4 3 12 3c14 1 12 18 0 18-3 0-4 0-6-1zM7 13h1M12 13h1M16 13h1" /><circle cx="19" cy="4" r="4" stroke={BLUE} fill="#d6e8fd" /></Icon>
            <Icon w={21} stroke={2}><path d="M5 8c0-7 10-6 9 0 0 4-5 4-5 8M9 20v1" /><path d="M18 11h5l-2 4z" fill={INK} stroke="none" /></Icon>
            <Icon w={20} stroke={1.500}><path d="M8 2c2 3 6 3 8 0l6 4-2 6-3-1v12H7V11l-3 1-2-6z" /></Icon>
            <Icon w={16} stroke={2}><path d="M2 17L12 6l10 11" /></Icon>
          </MenuTools>
        </MenuRow>
      </HeadRows>
    </Head>
  );
}

function RibbonArea() {
  return (
    <Ribbon>
      <Group $pad="4px 18px 0 10px">
        <PickBody>
          <PickButton>
            <Icon w={40} h={42} vb={40} stroke={2}><path d="M11 5v29l9-8h12z" stroke={BLUE} /></Icon>
            选择
          </PickButton>
          <GroupBody>
            <SmallCol>
              <SmallButton><Icon w={18}><path d="M14 7l5 5M12 9l3-3c2-6 9-4 6 2l-4 5z" fill={INK} /><path stroke={BLUE} d="M12 10l-9 9-1 4 4-1 9-9" /></Icon>拾取构件</SmallButton>
              <SmallButton><Icon w={18}><path d="M15 6V2H2v13h4" /><path stroke={BLUE} d="M8 8h14v9c-2 4-4 5-7 6-5-2-7-4-7-8z" /></Icon>批量选择</SmallButton>
              <SmallButton><Icon w={18}><path d="M21 9V2H2v20h9M6 7h10M6 12h5M6 17h4" /><path d="M14 11v11l3-3h5z" fill={BLUE} stroke={BLUE} /></Icon>按属性选择 <Caret w={7} color="#888" /></SmallButton>
            </SmallCol>
            <SmallCol>
              <SmallButton><Icon w={18}><path d="M22 11V2H2v20h9M6 6h4v4H6zM14 7h4M6 15h4v3H6z" /><Lens x={16} y={17} /></Icon>查找图元</SmallButton>
              <SmallButton $off><Icon w={18} color={GREY}><path d="M2 2h18l-7 9v6M2 2l7 9v11M16 14h6M16 18h6M16 22h6" /></Icon>过滤图元</SmallButton>
            </SmallCol>
          </GroupBody>
        </PickBody>
        <GroupName>选择</GroupName>
      </Group>
      {RIBBON.map(([name, items, pad]) => (
        <Group key={name} $pad={pad}>
          <GroupBody>
            {items.map(([icon, label, off]) => (
              <BigButton key={label} $off={off}>
                <Icon w={40} vb={40} stroke={2} color={off ? GREY : INK}>{big[icon]}</Icon>
                {label}
              </BigButton>
            ))}
          </GroupBody>
          <GroupName>{name}</GroupName>
        </Group>
      ))}
    </Ribbon>
  );
}

function Navigator() {
  return (
    <NavPanel>
      <Strip><button aria-label="关闭导航栏"><CloseIcon /></button></Strip>
      <PanelTitle>导航栏</PanelTitle>
      <NavTools>
        <NavTool aria-label="展开"><Icon w={16} vb={16} color={BLUE} stroke={1.500}><path d="M11 2v5M8.500 4.500h5M5 8v5M2.500 10.500h5" /></Icon></NavTool>
        <NavTool $on aria-label="列表"><Icon w={20} color={BLUE}><path d="M10 4h13M10 12h13M10 20h13" /><path d="M2 3h3v3H2zM2 11h3v3H2zM2 19h3v3H2z" strokeWidth="1.500" /></Icon></NavTool>
        <NavTool $on aria-label="卡片"><Icon w={20} color={BLUE}><rect x="1" y="2" width="21" height="20" rx="2" /><path d="M6 8h1M10 8h8M6 12h10M6 16h5" /></Icon></NavTool>
      </NavTools>
      <ScrollArea>
        <NavList>
          {NAV.map((n) => (
            <li key={n.head || n.name}>
              {n.head ? (
                <NavHead>
                  {n.head}
                  {n.trial && <Icon w={13} h={16} vb={13} stroke={1}><path d="M1 6h11v9H1zM4 6c-1-6 6-6 5 0M6.500 9v3" /></Icon>}
                  {n.trial && <Trial>免费试用</Trial>}
                </NavHead>
              ) : (
                <NavItem $on={n.on}>
                  <NavIcon><Icon w={23} vb={23} stroke={1.500} color={BLUE}>{n.icon}</Icon>{n.dot && <Dot />}</NavIcon>
                  {n.name}
                </NavItem>
              )}
            </li>
          ))}
        </NavList>
        <Track $top={145}><Thumb $h={278} /></Track>
      </ScrollArea>
    </NavPanel>
  );
}

function PropertyTable() {
  return (
    <Grid>
      <colgroup><col width="27" /><col width="127" /><col width="127" /><col width="51" /></colgroup>
      <thead><tr><th aria-label="序号" /><th>属性名称</th><th>属性值</th><th>附加</th></tr></thead>
      <tbody>
        {PROPS.map((p, i) => (
          <tr key={i}>
            <IndexCell scope="row">{i + 1}</IndexCell>
            <NameCell $link={p.link} $depth={p.depth}>
              {!p.depth && p.n}
              {p.depth === 1 && <TreeName $pad={3}><Toggle aria-label="折叠" /><TreeText>{p.n}</TreeText></TreeName>}
              {p.depth === 2 && <TreeName $pad={11}><Rail $w={20} $arm /><TreeText>{p.n}</TreeText></TreeName>}
            </NameCell>
            <ValueCell $dim={p.dim}>
              <ValueFlow>
                {p.bar && <Icon w={14} vb={14} stroke={1} color="#222"><path d="M7 0v12M2 3v4h10V3M4 9V3c0-2 6-2 6 0v6M2 9h10" /></Icon>}
                {p.v}
              </ValueFlow>
            </ValueCell>
            <CheckCell>{p.c && <TriCheck label={`附加 ${p.n}`} />}</CheckCell>
          </tr>
        ))}
      </tbody>
    </Grid>
  );
}

function MiddlePanels() {
  return (
    <MidColumn>
      <Panel $flex="0 0 351px">
        <Strip><button aria-label="关闭构件列表"><CloseIcon /></button></Strip>
        <Tabs><Tab $on>构件列表</Tab><Tab>图纸管理</Tab></Tabs>
        <Actions>
          <Action>{quick.neu}新建 <Caret w={7} color="#999" /></Action>
          <Action><Icon w={19}><path d="M7 9H2v13h13v-5" /><rect x="8" y="2" width="14" height="14" stroke={BLUE} fill="#d6e8fd" rx="1" /></Icon>复制</Action>
          <Action><Icon w={18}><path d="M1 6h22M8 6V2h8v4M4 6v16h16V6" /><path d="M10 11v7M14 11v7" stroke="#f0392b" /></Icon>删除</Action>
          <Action><Icon w={20}><path d="M6 7v12h12M2 10v12h12" /><rect x="9" y="2" width="13" height="13" stroke={BLUE} fill="#d6e8fd" rx="1" /></Icon>层间复制</Action>
          <MoreButton aria-label="更多"><Icon w={10} vb={10} color="none"><path d="M0 2l5 3-5 3zM5 2l5 3-5 3z" fill={INK} /></Icon></MoreButton>
        </Actions>
        <SearchLine><PlainInput placeholder="搜索构件..." aria-label="搜索构件" /><SearchIcon /></SearchLine>
        <Tree>
          <TreeRoot><Caret color="#777" />板受力筋</TreeRoot>
          {PARTS.map((t, i) => <TreeLeaf key={t} $on={i === 5}>{t}</TreeLeaf>)}
        </Tree>
      </Panel>
      <Panel $flex="1">
        <Strip><button aria-label="关闭属性列表"><CloseIcon /></button></Strip>
        <Tabs><Tab $on>属性列表</Tab><Tab>图层管理</Tab></Tabs>
        <ScrollArea>
          <PropertyTable />
          <Track $top={17}><Thumb $h={241} /></Track>
        </ScrollArea>
      </Panel>
    </MidColumn>
  );
}

function StageArea() {
  return (
    <Stage>
      <Plan />
      <ViewTools>
        <ViewButton aria-label="动态观察"><Icon w={25} stroke={1.500}><circle cx="12" cy="12" r="10" /><path stroke={BLUE} d="M5 8C-2 14-1 18 5 18c8 0 20-9 18-14-1-2-4-2-6-1" /></Icon></ViewButton>
        <ViewButton aria-label="三维"><Icon w={25} vb={25} stroke={1.500}>{cube("none", "none")}<text x="4" y="20" fontSize="9" fontWeight="700" fill={BLUE} stroke="none">3D</text></Icon></ViewButton>
        <ViewButton aria-label="俯视"><Icon w={25} vb={25} stroke={1.500}>{cube("none", "#cfe5ff")}</Icon><Caret w={7} /></ViewButton>
        <ViewButton aria-label="实体"><Icon w={25} vb={25} stroke={1.500} color={BLUE}>{cube("#cfe5ff", "#e6f1ff")}</Icon><Caret w={7} /></ViewButton>
        <ViewButton aria-label="全屏"><Icon w={25} vb={25} stroke={1.500}><path d="M1 8V1h7M17 1h7v7M24 17v7h-7M8 24H1v-7" /></Icon></ViewButton>
        <ViewButton aria-label="局部三维"><Icon w={25} vb={25} stroke={1.500}><rect x="1" y="1" width="23" height="23" rx="1" strokeDasharray="2 3" /><path stroke={BLUE} d="M12.500 6l6 3.500v7l-6 3.500-6-3.500v-7zM6.500 9.500l6 3.500 6-3.500M12.500 13v7" /></Icon></ViewButton>
        <Rule />
        <ViewButton aria-label="显示设置"><Icon w={25} vb={25} stroke={1.500}><path d="M24 15V1H1v23h11M5 7h1M9 7h11M5 12h1M9 12h6M5 17h3" /><path stroke={BLUE} d="M13 21c3-5 8-5 11 0-3 5-8 5-11 0z" /><circle cx="18.500" cy="21" r="1" stroke={BLUE} /></Icon></ViewButton>
      </ViewTools>
      <Tip>点击图标可调节提示信息位置~<TipButton>不再提示</TipButton></Tip>
      <Prompt>
        <Icon w={19} vb={19} stroke={1} color="#ddd"><path d="M1 10h8v8M9 10l-8 8M18 1l-7 7M11 0v8h8" /></Icon>
        按鼠标左键指定第一个角点，或拾取构件图元
      </Prompt>
    </Stage>
  );
}

function DisplaySettings() {
  return (
    <SidePanel>
      <Strip $edge><button aria-label="关闭显示设置"><CloseIcon w={8} /></button></Strip>
      <PanelTitle>显示设置</PanelTitle>
      <SideTabs><SideTab $on>图元显示</SideTab><SideTab>楼层显示</SideTab></SideTabs>
      <SideBody>
        <GridFrame>
          <Grid>
            <colgroup><col /><col width="79" /><col width="79" /></colgroup>
            <thead><tr><th>图层构件</th><HotTh>显示图元</HotTh><th>显示名称</th></tr></thead>
            <tbody>
              {LAYERS.map(([depth, name, state, locked], i) => {
                const last = !!LAYERS[i + 1] && LAYERS[i + 1][0] < depth;
                return (
                  <tr key={i}>
                    <td>
                      <TreeName $pad={depth ? 10 : 2}>
                        {depth > 0 && <Rail $w={depth === 1 ? 4 : 12} $arm={depth === 1} />}
                        {depth === 2 ? <Rail $w={20} $arm $last={last} /> : <Toggle aria-label={`折叠 ${name}`} />}
                        <TreeText>{name}</TreeText>
                      </TreeName>
                    </td>
                    <CheckCell $focus={i === 0}><TriCheck state={state} label={`显示图元 ${name}`} /></CheckCell>
                    <CheckCell><TriCheck disabled={!!locked} label={`显示名称 ${name}`} /></CheckCell>
                  </tr>
                );
              })}
            </tbody>
          </Grid>
        </GridFrame>
        <Track $top={18} $w={14}><Thumb $h={145} /></Track>
      </SideBody>
      <SideFoot><ResetButton>恢复默认设置</ResetButton></SideFoot>
    </SidePanel>
  );
}

function Footers() {
  return (
    <>
      <StatusBar>
        <StatusText $w={113}>层高：  5</StatusText>
        <StatusText $w={175}>标高：  -5.05~-0.05</StatusText>
        <StatusText $w={138}>选中图元：0</StatusText>
        <StatusText $w={139}>隐藏图元：0</StatusText>
        <SnapButton aria-label="正交"><Icon w={20} stroke={1.500}><path d="M2 2v20h20M2 14h7v8" /></Icon></SnapButton>
        <SnapButton $menu $on $after={7} aria-label="捕捉"><Icon w={20} stroke={1.500}><rect x="3" y="3" width="19" height="19" rx="3" /><circle cx="3" cy="3" r="2" stroke={BLUE} fill="#fff" /></Icon><Caret w={7} /></SnapButton>
        <SnapButton $after={8} aria-label="交点"><Icon w={20} stroke={1.500} color="#888"><path d="M2 2l20 20M22 2L2 22" /></Icon></SnapButton>
        <SnapButton $menu aria-label="角度"><Icon w={20} stroke={1.500}><path d="M19 3L1 22h21" /><circle cx="9" cy="13" r="2" /></Icon><Caret w={7} /></SnapButton>
        <SnapButton $menu aria-label="偏移"><Icon w={20} stroke={1.500}><path d="M5 2v9M0 7h10" /><rect x="9" y="16" width="14" height="5" fill={INK} /></Icon><Caret w={7} /></SnapButton>
        <SnapButton aria-label="图层"><Icon w={20} stroke={1.500}><rect x="1" y="1" width="18" height="17" rx="1" /><path d="M4 4h12v11H4z" fill={INK} /><path d="M5 21h9M21 6v7" /><path d="M16 14v9l6-3z" fill={INK} /></Icon></SnapButton>
        <SnapButton aria-label="拾取"><Icon w={20} stroke={1.500}><path d="M2 21c0-8 2-11 5-13l14-5" /><circle cx="2" cy="21" r="1" /><circle cx="21" cy="3" r="1" /><path d="M16 13v8l6-4z" fill={INK} /></Icon></SnapButton>
      </StatusBar>
      <TaskBar>
        <TaskGroup>
          <TaskItem aria-label="开始"><Icon w={20} vb={20} color="none"><path d="M0 3l9-1v8H0zM10 2l10-2v10H10zM0 11h9v8l-9-1zM10 11h10v9l-10-1z" fill="#fff" /></Icon></TaskItem>
          <TaskItem aria-label="搜索"><Icon w={24} vb={24} stroke={2} color="#eee"><circle cx="13" cy="9" r="7" /></Icon></TaskItem>
          <TaskItem aria-label="任务视图"><Icon w={20} vb={20} stroke={1.500} color="#eee"><path d="M1 0v4h11V0M1 20V9h11v11M19 1v6M19 10v1" /></Icon></TaskItem>
          <TaskItem aria-label="应用"><Icon w={24} vb={24} color="none"><path d="M5 5h18v18H5z" fill="#0a7fe0" /></Icon></TaskItem>
          <TaskItem aria-label="浏览器"><Icon w={20} vb={20} color="#fff" stroke={3}><circle cx="14" cy="11" r="9" fill="#2fc13a" stroke="#2fc13a" strokeWidth="1" /><path d="M9 10h10c0-7-10-7-10 0" /></Icon></TaskItem>
          <TaskItem aria-label="表格"><Icon w={20} vb={20} color="#cfe5ff" stroke={1}><rect x="6" y="1" width="19" height="19" fill="#1158b8" /><path d="M10 6v8M14 5v8M18 6v8M22 5v8M9 9h13" /></Icon></TaskItem>
          <TaskItem $on aria-label="广联达"><Icon w={20} vb={20} color="none"><rect x="7" y="0" width="19" height="20" rx="3" fill="#e8f6ff" /><path d="M10 5h13v4h-4v10h-5V9h-4z" fill="#0a9bff" /></Icon></TaskItem>
        </TaskGroup>
        <Tray>
          <TrayIcons><Icon w={96} h={20} vb={96} stroke={1.500} color="#fff"><path d="M0 8l4-4 4 4M27 1v3M31 1v3M25 4h8v3M34 2h11v9H30M70 1c-8 0-12 4-14 9M70 5c-5 0-8 3-9 6M79 6h4l5-5v14" /><path d="M92 3c2 2 2 5 0 8M95 1c3 3 3 7 0 11" stroke="#777" /></Icon></TrayIcons>
          <TrayText $size={20}>英</TrayText>
          <ImeMark>拼</ImeMark>
          <TrayText>0:18:13</TrayText>
        </Tray>
      </TaskBar>
    </>
  );
}

export default function App() {
  return (
    <Window>
      <Global />
      <TitleArea />
      <RibbonArea />
      <FilterBar>
        {COMBOS.map(([label, value]) => (
          <ComboBox key={label}>
            <ComboSelect aria-label={label} defaultValue={value}><option>{value}</option></ComboSelect>
            <ComboArrow><Caret w={7} /></ComboArrow>
          </ComboBox>
        ))}
      </FilterBar>
      <Main>
        <Navigator />
        <MiddlePanels />
        <Gutter><Grip aria-label="折叠左侧" /></Gutter>
        <StageArea />
        <Gutter><Grip aria-label="折叠右侧"><Icon w={5} h={10} vb={5} color="none"><path d="M0 1l5 4-5 4z" fill="#c9cac8" /></Icon></Grip></Gutter>
        <DisplaySettings />
      </Main>
      <Footers />
    </Window>
  );
}
